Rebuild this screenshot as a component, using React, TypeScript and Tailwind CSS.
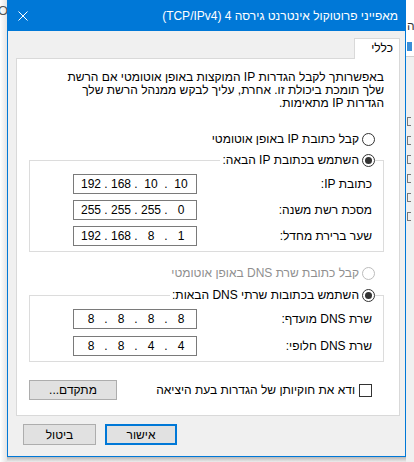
import React from 'react';

const fieldsIp = [
  { label: 'כתובת IP:', value: ['192', '168', '10', '10'] },
  { label: 'מסכת רשת משנה:', value: ['255', '255', '255', '0'] },
  { label: 'שער ברירת מחדל:', value: ['192', '168', '8', '1'] },
];

const fieldsDns = [
  { label: 'שרת DNS מועדף:', value: ['8', '8', '8', '8'] },
  { label: 'שרת DNS חלופי:', value: ['8', '8', '4', '4'] },
];

function Radio({ checked, disabled }: { checked?: boolean; disabled?: boolean }) {
  return (
    <span
      className={`flex h-[13px] w-[13px] shrink-0 items-center justify-center rounded-full border bg-white ${
        disabled ? 'border-[#bcbcbc]' : 'border-[#333333]'
      }`}
    >
      {checked && <span className="h-[7px] w-[7px] rounded-full bg-[#333333]" />}
    </span>
  );
}

function IpBox({ parts }: { parts: string[] }) {
  return (
    <div dir="ltr" className="flex h-[20px] w-[124px] items-center border border-[#7a7a7a] bg-white pl-[5px]">
      {parts.map((p, i) => (
        <React.Fragment key={i}>
          {i > 0 && <span className="w-[6px] text-center">.</span>}
          <span className="w-[24px] text-center">{p}</span>
        </React.Fragment>
      ))}
    </div>
  );
}

function Group({
  legend,
  rows,
  gap,
}: {
  legend: string;
  rows: { label: string; value: string[] }[];
  gap: string;
}) {
  return (
    <div className="relative border border-[#dcdcdc] pt-[13px] pb-[5px]">
      {/* legend sits over the top border line */}
      <div className="absolute top-[-9px] right-[8px] flex h-[16px] items-center gap-[3px] bg-white pl-[2px]">
        <Radio checked />
        <span>{legend}</span>
      </div>
      <div className={`flex flex-col ${gap}`}>
        {rows.map((r) => (
          <div key={r.label} className="flex items-center justify-between pr-[11px] pl-[43px]">
            <span>{r.label}</span>
            <IpBox parts={r.value} />
          </div>
        ))}
      </div>
    </div>
  );
}

export default function App() {
  return (
    <div className="flex h-[462px] w-[414px] overflow-hidden bg-white font-['Liberation_Sans',Arial,sans-serif] text-[12px] text-black">
      {/* left edge of the window behind */}
      <div className="flex h-full w-[7px] shrink-0 flex-col bg-gradient-to-r from-white to-[#e4e4e4]">
        <span className="-ml-[2px] mt-[4px] text-[13px] leading-[14px] text-[#555]">Ou</span>
      </div>

      <div className="flex h-full w-[399px] shrink-0 flex-col">
        <div dir="rtl" className="flex h-[457px] flex-col border border-t-0 border-[#0078d7] bg-[#f0f0f0]">
          {/* title bar */}
          <div className="flex h-[31px] shrink-0 items-center justify-between bg-[#0078d7] pr-[7px] pl-[10px] text-white">
            <span className="text-[12px]">מאפייני פרוטוקול אינטרנט גירסה 4 (TCP/IPv4)</span>
            <svg width="10" height="10" viewBox="0 0 10 10" className="stroke-white">
              <path d="M0.5 0.5 L9.5 9.5 M9.5 0.5 L0.5 9.5" strokeWidth="1" fill="none" />
            </svg>
          </div>

          <div className="flex flex-col pt-[7px] pr-[5px] pl-[8px]">
            <div className="flex">
              <div className="relative z-10 -mb-px flex h-[21px] w-[46px] items-center border border-b-0 border-[#d9d9d9] bg-white pr-[6px] pb-[2px]">
                כללי
              </div>
            </div>

            <div className="flex flex-col border border-[#d9d9d9] bg-white pt-[12px] pr-[15px] pb-[15px] pl-[12px]">
              <p className="leading-[13px]">
                באפשרותך לקבל הגדרות IP המוקצות באופן אוטומטי אם הרשת
                <br />
                שלך תומכת ביכולת זו. אחרת, עליך לבקש ממנהל הרשת שלך
                <br />
                הגדרות IP מתאימות.
              </p>

              <div className="mt-[21px] flex h-[16px] items-center gap-[3px] pr-[9px]">
                <Radio />
                <span>קבל כתובת IP באופן אוטומטי</span>
              </div>

              <div className="mt-[13px]">
                <Group legend="השתמש בכתובת IP הבאה:" rows={fieldsIp} gap="gap-[6px]" />
              </div>

              <div className="mt-[13px] flex h-[16px] items-center gap-[3px] pr-[9px] text-[#8f8f8f]">
                <Radio disabled />
                <span>קבל כתובת שרת DNS באופן אוטומטי</span>
              </div>

              <div className="mt-[14px]">
                <Group legend="השתמש בכתובות שרתי DNS הבאות:" rows={fieldsDns} gap="gap-[7px]" />
              </div>

              <div className="mt-[18px] flex h-[20px] items-center justify-between">
                <div className="flex items-center gap-[4px] pr-[12px]">
                  <span className="h-[13px] w-[13px] border border-[#333333] bg-white" />
                  <span>ודא את חוקיותן של הגדרות בעת היציאה</span>
                </div>
                <button className="h-[20px] w-[88px] border border-[#adadad] bg-[#e1e1e1]">מתקדם...</button>
              </div>
            </div>

            <div className="mt-[8px] flex justify-end gap-[9px] pl-[7px]">
              <button className="h-[21px] w-[72px] border-2 border-[#0078d7] bg-[#e1e1e1]">אישור</button>
              <button className="h-[21px] w-[73px] border border-[#adadad] bg-[#e1e1e1]">ביטול</button>
            </div>
          </div>
        </div>
        <div className="h-[5px] bg-gradient-to-b from-[#b8b8b8] to-[#ececec]" />
      </div>

      {/* right edge of the window behind */}
      <div className="flex h-full w-[8px] shrink-0 flex-col bg-[#f0f0f0]">
        <div className="h-[56px] bg-white pt-[20px] text-[12px] leading-[12px] text-[#333]">
          <div className="ml-[1px]">ה</div>
          <div className="mt-[10px] ml-[1px] h-[9px] w-[5px] bg-[#3a8ed8]" />
        </div>
        <div className="h-px bg-[#d0d0d0]" />
        <div className="flex flex-col gap-[10px] pt-[60px] pl-[1px]">
          {[0, 1, 2, 3, 4, 5].map((i) => (
            <div key={i} className="h-[9px] w-[4px] border border-r-0 border-[#777]" />
          ))}
        </div>
      </div>
    </div>
  );
}
